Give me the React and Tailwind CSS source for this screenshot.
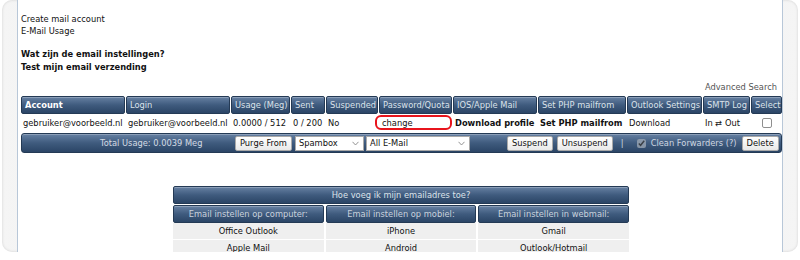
import { useState } from 'react'

const HEAD = 'bg-gradient-to-b from-[#6781a3] via-[#3f5b7e] to-[#2b4566] border border-[#243a55] rounded-[2px] shadow-[inset_0_1px_0_rgba(255,255,255,0.25)]'

const COLS = [
  { label: 'Account', w: 'w-[104px]', bold: true },
  { label: 'Login', w: 'w-[104px]' },
  { label: 'Usage (Meg)', w: 'w-[59px]' },
  { label: 'Sent', w: 'w-[34px]' },
  { label: 'Suspended', w: 'w-[52px]' },
  { label: 'Password/Quota', w: 'w-[73px]' },
  { label: 'IOS/Apple Mail', w: 'w-[84px]' },
  { label: 'Set PHP mailfrom', w: 'w-[88px]' },
  { label: 'Outlook Settings', w: 'w-[75px]' },
  { label: 'SMTP Log', w: 'w-[47px]' },
  { label: 'Select', w: 'w-[31px]' },
]

function Button({ children, className = '' }) {
  return (
    <button className={`h-[15px] px-[4px] leading-[13px] bg-gradient-to-b from-white to-[#e9e9e9] border border-[#a9a9a9] rounded-[2px] text-[#111] ${className}`}>
      {children}
    </button>
  )
}

function Select({ value, className }) {
  return (
    <div className={`h-[15px] pl-[3px] pr-[4px] bg-white border border-[#a9a9a9] flex items-center justify-between text-[#111] ${className}`}>
      <span>{value}</span>
      <svg width="7" height="5" viewBox="0 0 7 5" className="text-[#888]">
        <path d="M0.5 0.8 L3.5 4 L6.5 0.8" fill="none" stroke="currentColor" strokeWidth="0.9" />
      </svg>
    </div>
  )
}

export default function App() {
  const [selected, setSelected] = useState(false)
  const [clean, setClean] = useState(true)

  return (
    <div className="w-[800px] h-[260px] bg-white overflow-hidden font-['Verdana','DejaVu_Sans',sans-serif] text-[8.3px] text-[#111]">
      <div className="mt-[5px] mx-[2px] h-[252px] rounded-[10px] bg-gradient-to-r from-[#f5f5f5] via-[#e6e6e6] to-[#f5f5f5] shadow-[inset_0_0_3px_rgba(0,0,0,0.15)]">
        <div className="mx-[15px] -mt-[5px] h-[252px] bg-white border-x border-[#b8c7d8] overflow-hidden pl-[3px] pr-[2px] pt-[13px]">
          {/* links */}
          <div className="leading-[12px]">
            <div>Create mail account</div>
            <div>E-Mail Usage</div>
          </div>
          <div className="mt-[11px] leading-[13px] font-bold">
            <div>Wat zijn de email instellingen?</div>
            <div>Test mijn email verzending</div>
          </div>
          <div className="mt-[8px] text-right pr-[3px] text-[#555] leading-[11px]">Advanced Search</div>

          {/* tabel */}
          <div className="mt-[3px] w-[761px]">
            <div className="flex gap-[1px] h-[18px]">
              {COLS.map((c) => (
                <div
                  key={c.label}
                  className={`${c.w} ${HEAD} flex items-center px-[3px] whitespace-nowrap overflow-hidden ${c.bold ? 'font-bold text-white' : 'text-[#dbe2ea]'}`}
                >
                  {c.label}
                </div>
              ))}
            </div>
            <div className="flex gap-[1px] h-[18px] items-stretch whitespace-nowrap">
              <div className="w-[104px] px-[2px] flex items-center">gebruiker@voorbeeld.nl</div>
              <div className="w-[104px] px-[2px] flex items-center">gebruiker@voorbeeld.nl</div>
              <div className="w-[59px] px-[2px] flex items-center">0.0000 / 512</div>
              <div className="w-[34px] px-[2px] flex items-center">0 / 200</div>
              <div className="w-[52px] px-[2px] flex items-center">No</div>
              <div className="w-[73px] px-[2px] flex items-center relative">
                <span className="pl-[1px]">change</span>
                <span className="absolute -left-[4px] top-[1px] w-[77px] h-[15px] border-2 border-[#e8141c] rounded-[6px]" />
              </div>
              <div className="w-[84px] px-[2px] flex items-center font-bold">Download profile</div>
              <div className="w-[88px] px-[2px] flex items-center font-bold">Set PHP mailfrom</div>
              <div className="w-[75px] px-[2px] flex items-center">Download</div>
              <div className="w-[47px] px-[2px] flex items-center">In ⇄ Out</div>
              <div className="w-[31px] flex items-center justify-center">
                <input
                  type="checkbox"
                  checked={selected}
                  onChange={() => setSelected(!selected)}
                  className="w-[10px] h-[10px] m-0 appearance-none border border-[#8f8f8f] rounded-[2px] bg-white"
                />
              </div>
            </div>

            {/* onderbalk */}
            <div className={`mt-[1px] h-[20px] ${HEAD} rounded-[3px] flex items-center whitespace-nowrap`}>
              <div className="w-[213px] pl-[78px] text-[#d4dbe4]">Total Usage: 0.0039 Meg</div>
              <Button>Purge From</Button>
              <Select value="Spambox" className="ml-[3px] w-[69px]" />
              <Select value="All E-Mail" className="ml-[2px] w-[104px]" />
              <Button className="ml-[37px]">Suspend</Button>
              <Button className="ml-[4px]">Unsuspend</Button>
              <span className="ml-[8px] text-[#cfd7e1]">|</span>
              <label className="ml-[13px] flex items-center text-[#cfd7e1]">
                <input
                  type="checkbox"
                  checked={clean}
                  onChange={() => setClean(!clean)}
                  className="w-[9px] h-[9px] m-0 mr-[5px] accent-[#9aa6b4] opacity-80"
                />
                Clean Forwarders (?)
              </label>
              <Button className="ml-[5px]">Delete</Button>
            </div>
          </div>

          {/* hulp tabel */}
          <div className="mt-[33px] ml-[152px] w-[456px]">
            <div className={`h-[18px] ${HEAD} flex items-center justify-center text-[#dbe2ea]`}>
              Hoe voeg ik mijn emailadres toe?
            </div>
            <div className="flex gap-[2px] h-[18px] mt-[1px]">
              {['Email instellen op computer:', 'Email instellen op mobiel:', 'Email instellen in webmail:'].map((t) => (
                <div key={t} className={`flex-1 ${HEAD} flex items-center justify-center text-[#c9d2dd]`}>{t}</div>
              ))}
            </div>
            {[
              ['Office Outlook', 'iPhone', 'Gmail'],
              ['Apple Mail', 'Android', 'Outlook/Hotmail'],
            ].map((row) => (
              <div key={row[0]} className="flex gap-[2px] h-[17px] border-b border-white">
                {row.map((t) => (
                  <div key={t} className="flex-1 bg-[#efefef] flex items-center justify-center">{t}</div>
                ))}
              </div>
            ))}
          </div>
        </div>
      </div>
    </div>
  )
}
